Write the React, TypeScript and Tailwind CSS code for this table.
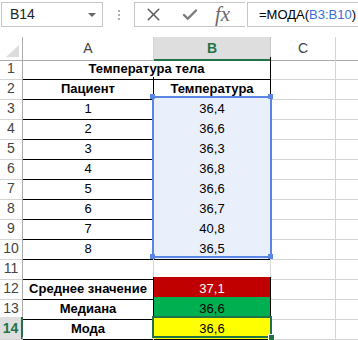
import React from "react";
import { X, Check } from "lucide-react";

const font = { fontFamily: '"Liberation Sans", Arial, sans-serif' };

type Row = { n: number; a?: string; b?: string; kind: "title" | "head" | "data" | "empty" | "sum"; bBg?: string; bText?: string };

const rows: Row[] = [
  { n: 1, a: "Температура тела", kind: "title" },
  { n: 2, a: "Пациент", b: "Температура", kind: "head" },
  { n: 3, a: "1", b: "36,4", kind: "data" },
  { n: 4, a: "2", b: "36,6", kind: "data" },
  { n: 5, a: "3", b: "36,3", kind: "data" },
  { n: 6, a: "4", b: "36,8", kind: "data" },
  { n: 7, a: "5", b: "36,6", kind: "data" },
  { n: 8, a: "6", b: "36,7", kind: "data" },
  { n: 9, a: "7", b: "40,8", kind: "data" },
  { n: 10, a: "8", b: "36,5", kind: "data" },
  { n: 11, kind: "empty" },
  { n: 12, a: "Среднее значение", b: "37,1", kind: "sum", bBg: "bg-[#c00000]", bText: "text-white" },
  { n: 13, a: "Медиана", b: "36,6", kind: "sum", bBg: "bg-[#00b050]", bText: "text-black" },
  { n: 14, a: "Мода", b: "36,6", kind: "sum", bBg: "bg-[#ffff00]", bText: "text-black" },
];

function FormulaBar() {
  return (
    <div className="flex h-[37px] items-start bg-white pt-[2px]">
      <div className="ml-[1px] flex h-[25px] w-[102px] items-center justify-between border border-[#c6c6c6] pl-[8px] pr-[6px] text-[14px] text-[#222]">
        <span>B14</span>
        <span className="h-0 w-0 border-x-[4px] border-t-[4px] border-x-transparent border-t-[#666]" />
      </div>
      <div className="flex w-[31px] flex-col items-center gap-[2px] pt-[8px]">
        <span className="h-[2px] w-[2px] bg-[#b0b0b0]" />
        <span className="h-[2px] w-[2px] bg-[#b0b0b0]" />
        <span className="h-[2px] w-[2px] bg-[#b0b0b0]" />
      </div>
      <div className="flex h-[25px] w-[111px] items-center border-y border-l border-[#c6c6c6] pl-[8px]">
        <X className="h-[21px] w-[21px] text-[#5e5e5e]" strokeWidth={1.8} />
        <Check className="ml-[17px] h-[18px] w-[18px] text-[#7a7a7a]" strokeWidth={3.2} />
        <span
          className="ml-[16px] text-[21px] italic leading-none text-[#6a6a6a]"
          style={{ fontFamily: '"Liberation Serif", "Times New Roman", serif' }}
        >
          fx
        </span>
      </div>
      <div className="ml-[2px] flex h-[25px] flex-1 items-center border-y border-l border-[#c6c6c6] pl-[11px] text-[13px] text-black">
        =МОДА(<span className="text-[#3a6fd8]">B3:B10</span>)
      </div>
    </div>
  );
}

function HeaderRow() {
  return (
    <div className="grid h-[20px] grid-cols-[23px_131px_117px_65px_1fr] text-[14px]">
      <div className="flex items-end justify-end border-r border-b border-[#ababab] pr-[3px] pb-[3px]">
        <svg width="13" height="12" viewBox="0 0 13 12">
          <path d="M13 0 L13 12 L0 12 Z" fill="#dcdcdc" />
        </svg>
      </div>
      <div className="flex items-center justify-center border-r border-b border-r-[#d4d4d4] border-b-[#ababab] text-[#444]">A</div>
      <div className="flex items-center justify-center border-b-2 border-r border-b-[#217346] border-r-[#c6c6c6] bg-[#dedede] pt-[1px] font-bold text-[#217346]">B</div>
      <div className="flex items-center justify-center border-r border-b border-r-[#d4d4d4] border-b-[#ababab] text-[#444]">C</div>
      <div className="border-b border-[#ababab]" />
    </div>
  );
}

function SheetRow({ r }: { r: Row }) {
  const selected = r.n === 14;
  const boxed = r.kind !== "empty";
  const sideBorder = boxed ? "border-r-black border-b-black" : "border-r-[#d4d4d4] border-b-black";
  const bold = r.kind === "title" || r.kind === "head" || r.kind === "sum";
  const inSel = r.kind === "data";
  return (
    <div className="grid h-[20px] grid-cols-[23px_131px_117px_65px_1fr] text-[13px]">
      <div
        className={
          selected
            ? "flex items-center justify-center border-r-2 border-b border-r-[#217346] border-b-[#d4d4d4] bg-[#dedede] pt-[1px] text-[14px] font-bold text-[#217346]"
            : "flex items-center justify-center border-r border-b border-r-[#ababab] border-b-[#d4d4d4] pt-[1px] text-[14px] text-[#444]"
        }
      >
        {r.n}
      </div>
      {r.kind === "title" ? (
        <div className="col-span-2 flex items-center justify-center border-r border-b border-black pt-[1px] font-bold">{r.a}</div>
      ) : (
        <>
          <div className={`flex items-center justify-center border-r border-b pt-[1px] ${sideBorder} ${bold ? "font-bold" : ""}`}>{r.a}</div>
          <div
            className={`flex items-center justify-center border-r border-b pt-[1px] ${sideBorder} ${r.kind === "head" ? "font-bold" : ""} ${inSel ? "bg-[#eaf0fb]" : ""} ${r.bBg ?? ""} ${r.bText ?? ""}`}
          >
            {r.b}
          </div>
        </>
      )}
      <div className="border-r border-b border-[#d4d4d4]" />
      <div className="border-b border-[#d4d4d4]" />
    </div>
  );
}

export default function App() {
  return (
    <div className="h-[340px] w-[358px] overflow-hidden bg-white text-black" style={font}>
      <FormulaBar />
      <HeaderRow />
      <div className="relative">
        {rows.map((r) => (
          <SheetRow key={r.n} r={r} />
        ))}
        <div className="grid h-[20px] grid-cols-[23px_131px_117px_65px_1fr]">
          <div className="border-r border-[#ababab]" />
          <div className="border-r border-[#d4d4d4]" />
          <div className="border-r border-[#d4d4d4]" />
          <div className="border-r border-[#d4d4d4]" />
          <div />
        </div>

        {/* formula reference range B3:B10 */}
        <div className="pointer-events-none absolute left-[152px] top-[39px] h-[162px] w-[120px] border-2 border-[#5b86e5]" />
        <span className="absolute left-[150px] top-[37px] h-[5px] w-[5px] bg-[#5b86e5]" />
        <span className="absolute left-[268px] top-[37px] h-[5px] w-[5px] bg-[#5b86e5]" />
        <span className="absolute left-[150px] top-[197px] h-[5px] w-[5px] bg-[#5b86e5]" />
        <span className="absolute left-[268px] top-[197px] h-[5px] w-[5px] bg-[#5b86e5]" />

        {/* active cell B14 */}
        <div className="pointer-events-none absolute left-[152px] top-[259px] h-[22px] w-[120px] border-2 border-[#217346]" />
        <span className="absolute left-[268px] top-[277px] h-[7px] w-[7px] border border-white bg-[#217346]" />
      </div>
    </div>
  );
}
